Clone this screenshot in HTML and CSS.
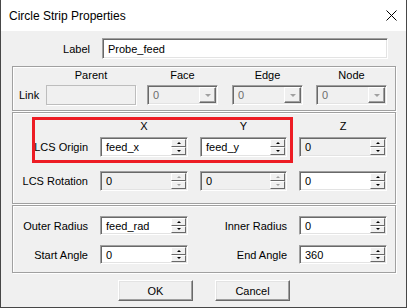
FILE: index.html
```html
<!DOCTYPE html>
<html lang="en">
<head>
    <meta charset="UTF-8">
    <title>Circle Strip Properties</title>
    <link rel="stylesheet" href="styles.css">
</head>
<body>
    <div class="dialog">
        <div class="titlebar">
            <span class="title">Circle Strip Properties</span>
            <svg class="close" width="11" height="11" viewBox="0 0 11 11">
                <path d="M0.5 0.5 L10.5 10.5 M10.5 0.5 L0.5 10.5" stroke="#000" stroke-width="1" fill="none"/>
            </svg>
        </div>

        <div class="content">
            <div class="label-row">
                <span class="lbl">Label</span>
                <div class="edit label-edit"><span class="val">Probe_feed</span></div>
            </div>

            <!-- link -->
            <div class="group link-group">
                <span></span>
                <span class="head parent-w">Parent</span>
                <span class="head combo-w">Face</span>
                <span class="head combo-w">Edge</span>
                <span class="head combo-w">Node</span>

                <span class="link-lbl">Link</span>
                <div class="edit flat parent-w"></div>
                <div class="edit combo combo-w"><span class="val dim">0</span><span class="drop"><i class="tri-down"></i></span></div>
                <div class="edit combo combo-w"><span class="val dim">0</span><span class="drop"><i class="tri-down"></i></span></div>
                <div class="edit combo combo-w"><span class="val dim">0</span><span class="drop"><i class="tri-down"></i></span></div>
            </div>

            <!-- local coordinate system -->
            <div class="group lcs-group">
                <span></span>
                <span class="head">X</span>
                <span class="head">Y</span>
                <span class="head">Z</span>

                <span class="row-lbl">LCS Origin</span>
                <div class="edit"><span class="val">feed_x</span><span class="spin"><b><i class="tri-up"></i></b><b><i class="tri-dn"></i></b></span></div>
                <div class="edit"><span class="val">feed_y</span><span class="spin"><b><i class="tri-up"></i></b><b><i class="tri-dn"></i></b></span></div>
                <div class="edit gray"><span class="val">0</span><span class="spin"><b><i class="tri-up"></i></b><b><i class="tri-dn"></i></b></span></div>

                <span class="row-lbl low">LCS Rotation</span>
                <div class="edit gray low"><span class="val">0</span><span class="spin off"><b><i class="tri-up"></i></b><b><i class="tri-dn"></i></b></span></div>
                <div class="edit gray low"><span class="val">0</span><span class="spin off"><b><i class="tri-up"></i></b><b><i class="tri-dn"></i></b></span></div>
                <div class="edit low"><span class="val">0</span><span class="spin"><b><i class="tri-up"></i></b><b><i class="tri-dn"></i></b></span></div>

                <div class="highlight"></div>
            </div>

            <!-- shape -->
            <div class="group shape-group">
                <span class="row-lbl">Outer Radius</span>
                <div class="edit"><span class="val">feed_rad</span><span class="spin"><b><i class="tri-up"></i></b><b><i class="tri-dn"></i></b></span></div>
                <span class="row-lbl">Inner Radius</span>
                <div class="edit"><span class="val">0</span><span class="spin"><b><i class="tri-up"></i></b><b><i class="tri-dn"></i></b></span></div>

                <span class="row-lbl">Start Angle</span>
                <div class="edit"><span class="val">0</span><span class="spin"><b><i class="tri-up"></i></b><b><i class="tri-dn"></i></b></span></div>
                <span class="row-lbl">End Angle</span>
                <div class="edit"><span class="val">360</span><span class="spin"><b><i class="tri-up"></i></b><b><i class="tri-dn"></i></b></span></div>
            </div>

            <div class="buttons">
                <button>OK</button>
                <button>Cancel</button>
            </div>
        </div>
    </div>
</body>
</html>
```

FILE: styles.css
```css
* {
    box-sizing: border-box;
}

body {
    margin: 0;
    background: #fff;
    font-family: "Liberation Sans", Arial, sans-serif;
    font-size: 11px;
    color: #000;
}

.dialog {
    width: 407px;
    height: 308px;
    background: #f0f0f0;
    border: 1px solid #474747;
    border-top: none;
}

.titlebar {
    height: 31px;
    background: #fff;
    display: flex;
    align-items: center;
    justify-content: space-between;
    padding: 0 9px 0 8px;
}

.title {
    font-size: 12px;
}

.content {
    padding: 7px 10px 0 11px;
}

.label-row {
    display: flex;
    align-items: center;
    height: 21px;
}

.lbl {
    width: 78px;
    text-align: right;
}

.label-edit {
    width: 286px;
    height: 21px;
    margin-left: 12px;
}

/* etched group boxes */
.group {
    width: 384px;
    border: 1px solid #a0a0a0;
    box-shadow: inset 1px 1px 0 #fff, 1px 1px 0 #fff;
    display: grid;
    align-items: center;
}

.link-group {
    margin-top: 7px;
    padding: 2px 0 5px 0;
    grid-template-columns: 33px 101px 85px 84px 71px;
    grid-template-rows: 13px 20px;
    row-gap: 3px;
}

.lcs-group {
    position: relative;
    margin-top: 1px;
    padding: 7px 0 12px 0;
    grid-template-columns: 75px 88px 87px 88px;
    grid-template-rows: 13px 20px 30px;
    column-gap: 12px;
    row-gap: 4px;
}

.shape-group {
    margin-top: 1px;
    padding: 10px 0 8px 0;
    grid-template-columns: 75px 88px 87px 88px;
    grid-template-rows: 19px 19px;
    column-gap: 12px;
    row-gap: 10px;
}

.head {
    text-align: center;
    line-height: 13px;
}

.parent-w {
    width: 90px;
}

.combo-w {
    width: 71px;
}

.link-lbl {
    padding-left: 6px;
}

.row-lbl {
    text-align: right;
    white-space: nowrap;
}

.highlight {
    position: absolute;
    left: 19px;
    top: 4px;
    width: 261px;
    height: 46px;
    border: 3px solid #ed1c24;
}

/* sunken edit field */
.edit {
    display: flex;
    height: 100%;
    padding: 1px;
    background: #fff;
    border: 1px solid;
    border-color: #a0a0a0 #fff #fff #a0a0a0;
    box-shadow: inset 1px 1px 0 #696969, inset -1px -1px 0 #e3e3e3;
}

.lcs-group .low {
    align-self: end;
    height: 20px;
    line-height: 20px;
}

.edit.gray,
.edit.combo {
    background: #f0f0f0;
}

.edit.flat {
    background: #f0f0f0;
    border-color: #bdbdbd;
    box-shadow: 1px 1px 0 #fff;
}

.val {
    flex: 1;
    padding-left: 4px;
    display: flex;
    align-items: center;
    white-space: nowrap;
}

.val.dim {
    color: #6d6d6d;
}

.spin {
    width: 15px;
    display: flex;
    flex-direction: column;
}

.spin b,
.drop {
    flex: 1;
    display: flex;
    align-items: center;
    justify-content: center;
    background: #f0f0f0;
    border: 1px solid;
    border-color: #fff #696969 #696969 #fff;
}

.drop {
    flex: none;
    width: 17px;
    box-shadow: inset -1px -1px 0 #a0a0a0;
}

.tri-up {
    border-left: 2px solid transparent;
    border-right: 2px solid transparent;
    border-bottom: 2px solid #000;
}

.tri-dn {
    border-left: 2px solid transparent;
    border-right: 2px solid transparent;
    border-top: 2px solid #000;
}

.spin.off .tri-up {
    border-bottom-color: #a0a0a0;
}

.spin.off .tri-dn {
    border-top-color: #a0a0a0;
}

.tri-down {
    border-left: 3px solid transparent;
    border-right: 3px solid transparent;
    border-top: 3px solid #a0a0a0;
}

.buttons {
    display: flex;
    justify-content: center;
    gap: 22px;
    margin-top: 7px;
}

button {
    width: 75px;
    height: 21px;
    padding: 0;
    background: #f0f0f0;
    font-family: "Liberation Sans", Arial, sans-serif;
    font-size: 11px;
    color: #000;
    border: 1px solid;
    border-color: #fff #696969 #696969 #fff;
    box-shadow: inset -1px -1px 0 #a0a0a0, inset 1px 1px 0 #e3e3e3;
}
```
